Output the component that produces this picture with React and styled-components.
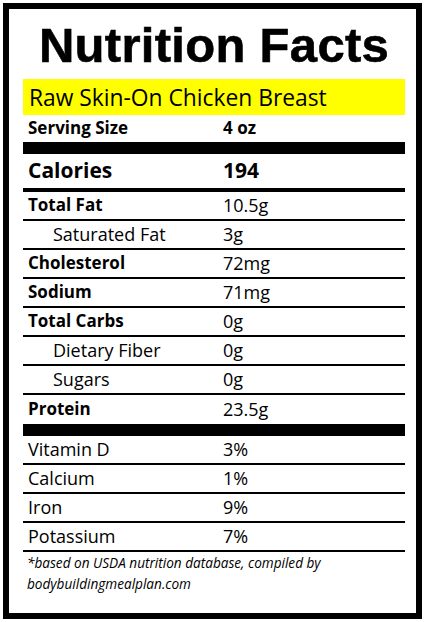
import { createGlobalStyle, styled } from "styled-components";

const GlobalStyle = createGlobalStyle`
  body {
    margin: 0;
    background: #fff;
  }
`;

const nutrients = [
  { label: "Total Fat", value: "10.5g", bold: true },
  { label: "Saturated Fat", value: "3g", indent: true },
  { label: "Cholesterol", value: "72mg", bold: true },
  { label: "Sodium", value: "71mg", bold: true },
  { label: "Total Carbs", value: "0g", bold: true },
  { label: "Dietary Fiber", value: "0g", indent: true },
  { label: "Sugars", value: "0g", indent: true },
  { label: "Protein", value: "23.5g", bold: true, last: true },
];

const vitamins = [
  { label: "Vitamin D", value: "3%" },
  { label: "Calcium", value: "1%" },
  { label: "Iron", value: "9%" },
  { label: "Potassium", value: "7%" },
];

const App = () => {
  return (
    <>
      <GlobalStyle />
      <Label>
        <Title>Nutrition Facts</Title>
        <FoodName>Raw Skin-On Chicken Breast</FoodName>

        <ServingRow>
          <span>Serving Size</span>
          <span>4 oz</span>
        </ServingRow>
        <ThickBar />

        <CaloriesRow>
          <span>Calories</span>
          <span>194</span>
        </CaloriesRow>

        {nutrients.map((n) => (
          <Row key={n.label} $bold={n.bold} $indent={n.indent} $last={n.last}>
            <span className="name">{n.label}</span>
            <span>{n.value}</span>
          </Row>
        ))}
        <ThickBar />

        {vitamins.map((v) => (
          <Row key={v.label}>
            <span className="name">{v.label}</span>
            <span>{v.value}</span>
          </Row>
        ))}

        <Footnote>
          *based on USDA nutrition database, compiled by
          <br />
          bodybuildingmealplan.com
        </Footnote>
      </Label>
    </>
  );
};

const Label = styled.section`
  box-sizing: border-box;
  width: 419px;
  height: 616px;
  margin: 3px;
  border: 6px solid #000;
  padding: 0 11px 0 14px;
  background: #fff;
  font-family: "Open Sans", "Noto Sans", sans-serif;
  color: #000;
`;

const Title = styled.h1`
  margin: 0;
  height: 70px;
  line-height: 72px;
  text-align: center;
  font-family: "Liberation Sans", Arial, sans-serif;
  font-weight: 700;
  font-size: 49px;
  letter-spacing: 0.3px;
  -webkit-text-stroke: 0.6px #000;
`;

const FoodName = styled.div`
  height: 36px;
  line-height: 38px;
  padding-left: 6px;
  background: #ffff00;
  font-size: 22.8px;
`;

const twoCol = `
  box-sizing: border-box;
  display: grid;
  grid-template-columns: 195px 1fr;
  align-items: center;
  padding: 0 0 2px 5px;
`;

const ServingRow = styled.div`
  ${twoCol}
  height: 27px;
  font-size: 17px;
  font-weight: 700;
`;

const ThickBar = styled.div`
  height: 12px;
  background: #000;
`;

const CaloriesRow = styled.div`
  ${twoCol}
  height: 38px;
  border-bottom: 4px solid #000;
  font-size: 21px;
  font-weight: 700;
`;

const Row = styled.div`
  ${twoCol}
  height: 29px;
  border-bottom: ${(p) => (p.$last ? "none" : "2px solid #000")};
  font-size: 18px;

  .name {
    font-weight: ${(p) => (p.$bold ? 700 : 400)};
    font-size: ${(p) => (p.$bold ? "17px" : "18px")};
    padding-left: ${(p) => (p.$indent ? "25px" : "0")};
  }
`;

const Footnote = styled.p`
  margin: 0;
  padding: 0 0 0 4px;
  font-size: 13.6px;
  font-style: italic;
  line-height: 21px;
`;

export default App;
